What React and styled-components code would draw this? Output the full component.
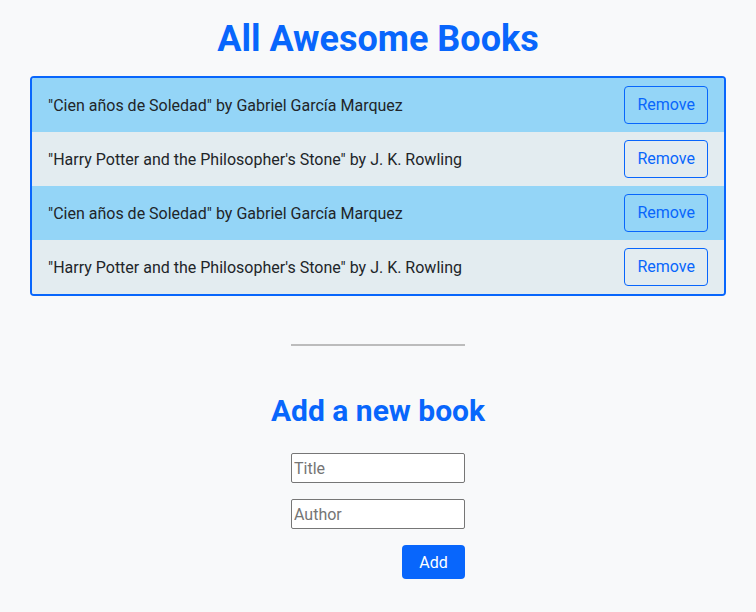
import React, { useState } from "react";
import styled, { createGlobalStyle } from "styled-components";

const GlobalStyle = createGlobalStyle`
  * { box-sizing: border-box; }
  body {
    margin: 0;
    background: #f8f9fa;
    font-family: Roboto, "Liberation Sans", sans-serif;
    color: #212529;
  }
`;

const Page = styled.main`
  display: flex;
  flex-direction: column;
  align-items: center;
  padding: 17px 30px 0;
`;

const Heading = styled.h1`
  margin: 0 0 15px;
  font-size: 36px;
  line-height: 44px;
  font-weight: 700;
  color: #0866fc;
`;

const BookList = styled.ul`
  list-style: none;
  margin: 0;
  padding: 0;
  width: 100%;
  border: 2px solid #0866fc;
  border-radius: 4px;
  overflow: hidden;
`;

const BookRow = styled.li`
  display: flex;
  align-items: center;
  justify-content: space-between;
  padding: 8px 16px;
  font-size: 16px;
  background: ${(p) => (p.$odd ? "#e3ecf0" : "#94d5f7")};
`;

const RemoveButton = styled.button`
  font-family: inherit;
  font-size: 16px;
  line-height: 24px;
  padding: 6px 12px;
  color: #0866fc;
  background: transparent;
  border: 1px solid #0866fc;
  border-radius: 4px;
  cursor: pointer;
`;

const Divider = styled.hr`
  width: 174px;
  margin: 48px 0 0;
  border: none;
  border-top: 2px solid #bcbcbc;
`;

const SubHeading = styled.h2`
  margin: 47px 0 24px;
  font-size: 30px;
  line-height: 36px;
  font-weight: 700;
  color: #0866fc;
`;

const Form = styled.form`
  display: flex;
  flex-direction: column;
  gap: 16px;
  width: 174px;
`;

const Input = styled.input`
  height: 30px;
  width: 100%;
  padding: 1px 2px;
  font-family: inherit;
  font-size: 16px;
  color: #212529;
  background: #fff;
  border: 1px solid #767676;
  border-radius: 2px;
  &::placeholder { color: #757575; }
`;

const AddButton = styled.button`
  align-self: flex-end;
  width: 63px;
  height: 34px;
  font-family: inherit;
  font-size: 16px;
  color: #fff;
  background: #0866fc;
  border: none;
  border-radius: 4px;
  cursor: pointer;
`;

const initialBooks = [
  { title: "Cien años de Soledad", author: "Gabriel García Marquez" },
  { title: "Harry Potter and the Philosopher's Stone", author: "J. K. Rowling" },
  { title: "Cien años de Soledad", author: "Gabriel García Marquez" },
  { title: "Harry Potter and the Philosopher's Stone", author: "J. K. Rowling" },
];

export default function App() {
  const [books, setBooks] = useState(initialBooks);

  return (
    <Page>
      <GlobalStyle />
      <Heading>All Awesome Books</Heading>
      <BookList>
        {books.map((book, i) => (
          <BookRow key={i} $odd={i % 2 === 1}>
            <span>
              "{book.title}" by {book.author}
            </span>
            <RemoveButton
              type="button"
              onClick={() => setBooks(books.filter((_, j) => j !== i))}
            >
              Remove
            </RemoveButton>
          </BookRow>
        ))}
      </BookList>
      <Divider />
      <SubHeading>Add a new book</SubHeading>
      <Form onSubmit={(e) => e.preventDefault()}>
        <Input placeholder="Title" />
        <Input placeholder="Author" />
        <AddButton type="submit">Add</AddButton>
      </Form>
    </Page>
  );
}
